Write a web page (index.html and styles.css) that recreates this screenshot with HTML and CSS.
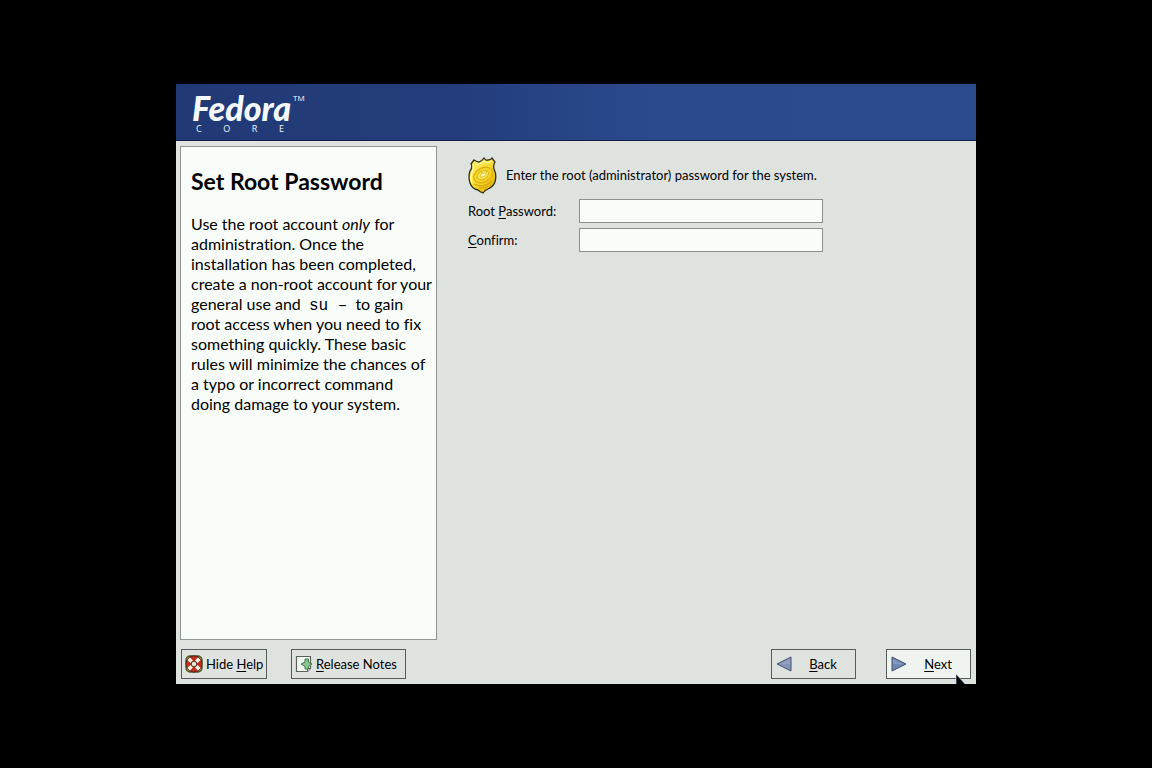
FILE: index.html
```html
<!DOCTYPE html>
<html lang="en">
	<head>
		<meta charset="UTF-8">
		<meta content="width=device-width, initial-scale=1" name="viewport">
		<title>Fedora Core</title>
		<link rel="stylesheet" href="styles.css">
	</head>
	<body>
		<div class="installer">
			<header class="banner">
				<div class="logo">
					<div class="name">Fedora<span class="tm">TM</span></div>
					<div class="core"><span>C</span><span>O</span><span>R</span><span>E</span></div>
				</div>
			</header>
			<div class="content">
				<aside class="help">
					<h1>Set Root Password</h1>
					<p>Use the root account <em>only</em> for administration. Once the installation has been completed, create a non-root account for your general use and <code>su&nbsp;–</code> to gain root access when you need to fix something quickly. These basic rules will minimize the chances of a typo or incorrect command doing damage to your system.</p>
				</aside>
				<main class="screen">
					<div class="intro">
						<svg class="badge" width="30" height="38" viewBox="0 0 30 38">
							<defs>
								<linearGradient id="gold" x1="0" y1="0" x2="1" y2="1">
									<stop offset="0" stop-color="#fff27a"/>
									<stop offset=".5" stop-color="#f5dc2c"/>
									<stop offset="1" stop-color="#d9a400"/>
								</linearGradient>
							</defs>
							<path d="M3 8L6 4Q9 6 11 6Q14 5 16 2Q18 5 20 4Q23 4 24 2L27 6Q25 9 26 13Q29 19 27 26Q25 31 20 33Q17 34 15 37Q12 36 10 34Q4 33 2 27Q0 21 2 15Q5 11 3 8Z" fill="url(#gold)" stroke="#332c10" stroke-width="1.3"/>
							<path d="M5 9Q6 13 4 17Q2 22 4 27M8 8Q13 9 16 5Q19 8 24 5" fill="none" stroke="#fffab8" stroke-width="1.2"/>
							<ellipse cx="15" cy="19" rx="10" ry="7" fill="#f3d426" stroke="#dcae12" stroke-width="1.2" transform="rotate(-30 15 19)"/>
							<ellipse cx="15" cy="19" rx="6" ry="4" fill="#fae957" stroke="#e0b81c" transform="rotate(-30 15 19)"/>
							<path d="M12 21L14 16L15 18L19 15L17 20L14 21Z" fill="#fff9ad" stroke="#d8b020" stroke-width=".7"/>
							<path d="M6 28Q15 33 24 25M11 32Q17 32 20 30" fill="none" stroke="#d8a80c" stroke-width="1.3"/>
						</svg>
						<span>Enter the root (administrator) password for the system.</span>
					</div>
					<form class="fields">
						<label for="password">Root <u>P</u>assword:</label>
						<input type="password" id="password" accesskey="p">
						<label for="confirm"><u>C</u>onfirm:</label>
						<input type="password" id="confirm" accesskey="c">
					</form>
				</main>
			</div>
			<footer class="buttons">
				<button type="button" class="hide" accesskey="h">
					<svg width="18" height="18" viewBox="0 0 18 18">
						<rect x="1" y="1" width="16" height="16" rx="4" fill="#a9a578" stroke="#4a5a2a" stroke-width="1.4"/>
						<circle cx="9" cy="9" r="5.5" fill="none" stroke="#3c1c12" stroke-width="5.8"/>
						<circle cx="9" cy="9" r="5.5" fill="none" stroke="#bd2f20" stroke-width="4.6"/>
						<path d="M3.7 3.7l3 3M11.3 11.3l3 3M3.7 14.3l3-3M11.3 6.700l3-3" stroke="#f7f2e2" stroke-width="3.6"/>
						<circle cx="9" cy="9" r="2.8" fill="#e2e6dc" stroke="#69301f"/>
					</svg>
					<span>Hide <u>H</u>elp</span>
				</button>
				<button type="button" class="notes" accesskey="r">
					<svg width="18" height="18" viewBox="0 0 18 18">
						<path d="M1.5 1.5h14v12l-3 3h-11z" fill="#f3f8f2" stroke="#59645b" stroke-width="1.2"/>
						<path d="M12.5 16.5v-3h3" fill="#cfd8cf" stroke="#59645b"/>
						<path d="M10 4h3.500v3l3.500 2-3.500 2.500v2.500H10v-2.500L6 9l4-2z" fill="#8ac491" stroke="#3d7848"/>
					</svg>
					<span><u>R</u>elease Notes</span>
				</button>
				<button type="button" class="nav back" accesskey="b">
					<svg width="16" height="16" viewBox="0 0 16 16">
						<path d="M15 1v14L1 8z" fill="#8495b9" stroke="#46516e"/>
						<path d="M14 3v5H4z" fill="#93a2c3"/>
					</svg>
					<span><u>B</u>ack</span>
				</button>
				<button type="button" class="nav next" accesskey="n">
					<svg width="16" height="16" viewBox="0 0 16 16">
						<path d="M1 1v14L15 8z" fill="#7188b3" stroke="#3d4e69"/>
						<path d="M2 3v5h10z" fill="#8399c0"/>
					</svg>
					<span><u>N</u>ext</span>
				</button>
			</footer>
			<svg class="pointer" width="12" height="18" viewBox="0 0 12 18">
				<path d="M1 1v15l3-3 2 5 3-1-2-5h4z" fill="#05050f" stroke="#d5dade" stroke-width=".6"/>
			</svg>
		</div>
	</body>
</html>
```
FILE: styles.css
```css
* {
	box-sizing: border-box;
}
body {
	background: #000;
	color: #000;
	margin: 0;
	min-height: 100vh;
	display: flex;
	align-items: center;
	justify-content: center;
	font: 13px/16px Lato, sans-serif;
	font-variant-ligatures: none;
}
.installer {
	position: relative;
	display: flex;
	flex-direction: column;
	width: 100%;
	max-width: 800px;
	min-height: 600px;
	background: #dfe3e0;
	overflow: hidden;
}
.banner {
	height: 57px;
	padding: 8px 16px;
	background: linear-gradient(90deg, #213a76, #233d7c 35%, #2b4a8c 60%, #2c4b8c);
	border-bottom: 1px solid #141c48;
	color: #f4faff;
}
.name {
	display: flex;
	font: italic 900 34px/32px Lato, sans-serif;
}
.tm {
	font: 8px/12px "Open Sans", sans-serif;
	margin-left: 2px;
}
.core {
	display: flex;
	justify-content: space-between;
	width: 92px;
	padding-left: 4px;
	font: 9px/10px "Open Sans", sans-serif;
}
.content {
	flex: 1;
	display: flex;
	padding: 5px 4px 0;
}
.help {
	flex: none;
	width: 257px;
	padding: 21px 2px 16px 10px;
	background: #f8fdf9;
	border: 1px solid #8f9591;
}
h1 {
	margin: 0;
	font-size: 23px;
	line-height: 26px;
}
.help p {
	margin: 20px 0 0;
	font-size: 16px;
	line-height: 20px;
}
code {
	padding: 0 4px;
	font-family: "Liberation Mono", monospace;
	font-size: 16px;
	line-height: 0;
}
.screen {
	flex: 1;
	padding: 10px 31px;
}
.intro {
	display: flex;
	align-items: center;
	gap: 8px;
}
.badge {
	flex: none;
}
.fields {
	display: grid;
	grid-template-columns: 106px minmax(0, 244px);
	gap: 5px;
	align-items: center;
	margin-top: 5px;
}
input {
	width: 100%;
	height: 24px;
	padding: 2px 4px;
	border: 1px solid #8b918d;
	background: #f8fdf9;
	font: inherit;
}
u {
	text-underline-offset: 2px;
}
.buttons {
	display: flex;
	padding: 9px 5px 5px;
}
button {
	display: flex;
	align-items: center;
	gap: 3px;
	height: 30px;
	padding: 0 3px;
	border: 1px solid #555b58;
	background: #dfe3e0;
	color: #000;
	font: inherit;
	white-space: nowrap;
}
button svg {
	flex: none;
}
.hide {
	width: 86px;
}
.notes {
	width: 115px;
	margin-left: 24px;
}
.nav {
	width: 85px;
	padding: 0 4px;
}
.nav span {
	flex: 1;
	text-align: center;
}
.back {
	margin-left: auto;
}
.next {
	margin-left: 30px;
	background: #eff4f1;
}
.pointer {
	position: absolute;
	right: 9px;
	bottom: -7px;
}
```
